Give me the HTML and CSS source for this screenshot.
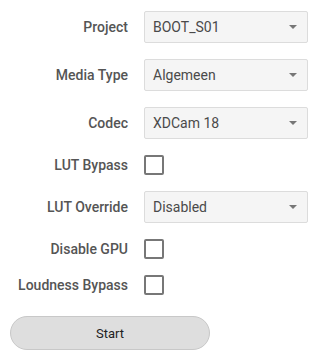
FILE: index.html
```html
<!DOCTYPE html>
<html>
<head>
<meta charset="utf-8">
<link rel="stylesheet" href="styles.css">
</head>
<body>
<div class="form">
  <div class="label">Project</div>
  <div class="select"><span>BOOT_S01</span><i class="caret"></i></div>
  <div class="label">Media Type</div>
  <div class="select"><span>Algemeen</span><i class="caret"></i></div>
  <div class="label">Codec</div>
  <div class="select"><span>XDCam 18</span><i class="caret"></i></div>
  <div class="label">LUT Bypass</div>
  <div class="check-cell"><span class="check"></span></div>
  <div class="label">LUT Override</div>
  <div class="select"><span>Disabled</span><i class="caret"></i></div>
  <div class="label">Disable GPU</div>
  <div class="check-cell"><span class="check"></span></div>
  <div class="label">Loudness Bypass</div>
  <div class="check-cell"><span class="check"></span></div>
</div>
<button class="start">Start</button>
</body>
</html>
```
FILE: styles.css
```css
html, body { margin: 0; padding: 0; background: #fff; }
body {
  font-family: Roboto, "Liberation Sans", sans-serif;
  padding: 11px 0 0 10px;
}
.form {
  display: grid;
  grid-template-columns: 118px 164px;
  column-gap: 16px;
  row-gap: 16px;
  align-items: center;
}
.label {
  text-align: right;
  font-size: 14px;
  font-weight: 500;
  color: #555;
}
.select {
  height: 32px;
  box-sizing: border-box;
  border: 1px solid #dcdcdc;
  border-radius: 2px;
  background: #f5f5f5;
  display: flex;
  align-items: center;
  justify-content: space-between;
  padding: 0 10px 0 8px;
  font-size: 14px;
  color: #4a4a4a;
}
.caret {
  width: 0; height: 0;
  border-left: 4px solid transparent;
  border-right: 4px solid transparent;
  border-top: 4px solid #777;
}
.check-cell { height: 20px; display: flex; align-items: center; }
.check {
  width: 20px; height: 20px;
  box-sizing: border-box;
  border: 2px solid #777;
  border-radius: 2px;
  background: #fff;
}
.start {
  display: block;
  margin-top: 21px;
  width: 200px;
  height: 34px;
  border: 1px solid #c8c8c8;
  border-radius: 17px;
  background: #dedede;
  font-family: Roboto, "Liberation Sans", sans-serif;
  font-size: 13px;
  color: #222;
  padding: 0;
}
```
